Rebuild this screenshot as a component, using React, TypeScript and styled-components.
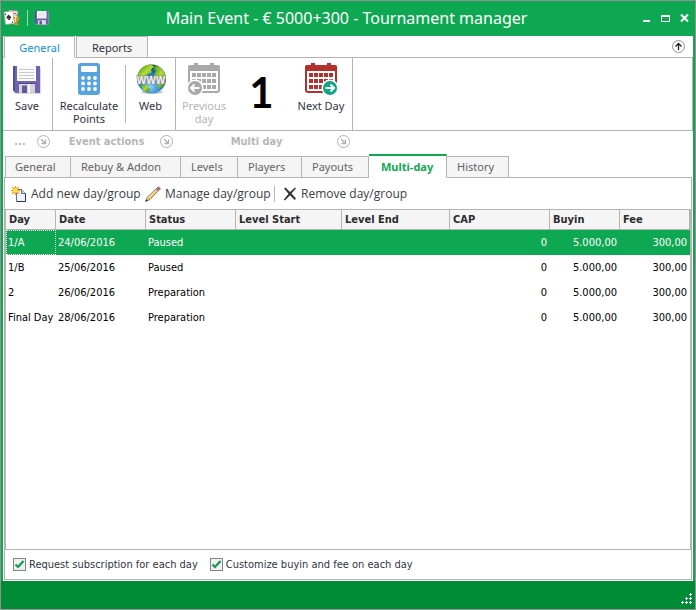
import React from "react";
import styled, { createGlobalStyle, css } from "styled-components";

const GREEN = "#0ea853";
const LINE = "#b4b4b4";
const SANS = '"Noto Sans", Tahoma, sans-serif';
const NARROW = '"DejaVu Sans Condensed", Tahoma, sans-serif';

const GlobalStyle = createGlobalStyle`
  *, *::before, *::after { box-sizing: border-box; }
  body { margin: 0; background: #ffffff; }
  button, input { font: inherit; color: inherit; margin: 0; padding: 0; border: 0; background: none; }
`;

const Window = styled.div`
  display: flex;
  flex-direction: column;
  min-height: 100vh;
  border: 1px solid #929292;
  background: ${GREEN};
  font-family: ${SANS};
  font-size: 11px;
  line-height: 13px;
  color: #2f3340;
`;

const TitleBar = styled.header`
  display: grid;
  grid-template-columns: 1fr auto 1fr;
  align-items: center;
  height: 35px;
  padding: 0 5px 2px 2px;
  color: #ffffff;
`;

const QuickAccess = styled.div`
  display: flex;
  align-items: center;
  gap: 7px;
  button { display: flex; }
`;

const QuickDivider = styled.span`
  width: 1px;
  height: 16px;
  background: #9bd8b4;
`;

const WindowTitle = styled.h1`
  margin: 0;
  font-size: 16px;
  line-height: 24px;
  font-weight: 400;
  white-space: nowrap;
`;

const WindowButtons = styled.div`
  display: flex;
  justify-content: flex-end;
  gap: 8px;
  button { display: flex; }
`;

const Body = styled.div`
  display: flex;
  flex: 1;
  flex-direction: column;
  margin: 0 2px;
  padding-bottom: 1px;
  background: #ffffff;
`;

const RibbonTabs = styled.nav`
  display: flex;
  align-items: center;
  height: 21px;
  padding-left: 1px;
`;

const RibbonTab = styled.button<{ $active?: boolean }>`
  width: ${(p) => (p.$active ? "71px" : "72px")};
  height: 22px;
  margin-right: 1px;
  border: 1px solid ${LINE};
  border-bottom-color: ${(p) => (p.$active ? "#ffffff" : LINE)};
  background: ${(p) => (p.$active ? "#ffffff" : "#f5f5f5")};
  color: ${(p) => (p.$active ? "#0a8fdc" : "#2f3340")};
  align-self: flex-start;
  z-index: 1;
`;

const CollapseButton = styled.button`
  display: flex;
  margin-left: auto;
  margin-right: 8px;
`;

const Ribbon = styled.div`
  display: flex;
  height: 74px;
  border: 1px solid ${LINE};
  border-left: 0;
`;

const RibbonGroup = styled.div<{ $width: number }>`
  display: flex;
  align-items: flex-start;
  width: ${(p) => p.$width}px;
  border-right: 1px solid ${LINE};
`;

const RibbonButton = styled.button<{ $width: number }>`
  display: flex;
  flex-direction: column;
  align-items: center;
  gap: 4px;
  width: ${(p) => p.$width}px;
  padding-top: 5px;
  color: #2f3340;
  &:disabled { color: #b4b4b4; }
`;

const RibbonDivider = styled.span`
  width: 1px;
  height: 58px;
  margin-top: 7px;
  background: ${LINE};
`;

const DayNumber = styled.output`
  width: 59px;
  padding-top: 11px;
  text-align: center;
  font-family: Lato, sans-serif;
  font-size: 42px;
  line-height: 46px;
  font-weight: 700;
  color: #000000;
`;

const Captions = styled.div`
  display: flex;
  height: 21px;
  margin-bottom: 3px;
`;

const Caption = styled.div<{ $width: number }>`
  display: flex;
  align-items: center;
  width: ${(p) => p.$width}px;
  padding-right: 3px;
  font-family: ${NARROW};
  font-weight: 700;
  color: #b6b6b6;
  span { flex: 1; text-align: center; }
  button { display: flex; }
`;

const PageTabs = styled.nav`
  display: flex;
  align-items: flex-end;
  height: 23px;
  margin-left: 2px;
`;

const PageTab = styled.button<{ $width: number; $active?: boolean }>`
  width: ${(p) => p.$width}px;
  height: 22px;
  padding: 0 10px 1px;
  text-align: left;
  border: 1px solid ${LINE};
  border-left-width: 0;
  background: #f5f5f5;
  color: #636363;
  &:first-child { padding-left: 9px; border-left-width: 1px; }
  ${(p) =>
    p.$active &&
    css`
      height: 24px;
      padding: 0 12px 1px;
      border-top: 2px solid ${GREEN};
      border-bottom-color: #ffffff;
      background: #ffffff;
      color: ${GREEN};
      font-weight: 700;
    `}
`;

const Page = styled.main`
  display: flex;
  flex: 1;
  flex-direction: column;
  margin: -1px 1px 0;
  border: 1px solid ${LINE};
`;

const RaisedTabs = styled.div`
  z-index: 1;
`;

const Toolbar = styled.div`
  display: flex;
  align-items: center;
  height: 31px;
  padding-left: 6px;
  font-family: "Open Sans", Tahoma, sans-serif;
  font-size: 12px;
  line-height: 16px;
`;

const ToolButton = styled.button<{ $width?: number }>`
  display: flex;
  align-items: center;
  gap: 4px;
  width: ${(p) => p.$width}px;
  color: #3a3d45;
  white-space: nowrap;
`;

const ToolDivider = styled.span`
  width: 1px;
  height: 16px;
  margin-right: 8px;
  background: ${LINE};
`;

const GridFrame = styled.div`
  flex: 1;
  border: 1px solid ${LINE};
`;

const DayTable = styled.table`
  width: 100%;
  table-layout: fixed;
  border-collapse: separate;
  border-spacing: 0;
  font-family: ${NARROW};
  color: #000000;
`;

const HeadCell = styled.th`
  height: 20px;
  padding: 0 3px 1px;
  border-right: 1px solid ${LINE};
  border-bottom: 1px solid ${LINE};
  background: #f5f5f5;
  color: #2c2c2c;
  font-weight: 700;
  text-align: left;
`;

const Row = styled.tr<{ $selected?: boolean }>`
  ${(p) =>
    p.$selected &&
    css`
      background: ${GREEN};
      color: #ffffff;
      td:first-child { outline: 1px dotted #ffffff; outline-offset: -1px; }
    `}
`;

const Cell = styled.td<{ $number?: boolean }>`
  height: 25px;
  padding: 0 3px 1px;
  padding-left: 2px;
  text-align: ${(p) => (p.$number ? "right" : "left")};
  white-space: nowrap;
`;

const Options = styled.div`
  display: flex;
  align-items: center;
  gap: 12px;
  height: 29px;
  padding-left: 8px;
  font-family: ${NARROW};
`;

const CheckLabel = styled.label`
  display: flex;
  align-items: center;
  gap: 3px;
`;

const CheckFrame = styled.span`
  display: grid;
  width: 13px;
  height: 13px;
  > * { grid-area: 1 / 1; }
  svg { pointer-events: none; visibility: hidden; }
  input:checked + svg { visibility: visible; }
`;

const CheckInput = styled.input`
  appearance: none;
  width: 13px;
  height: 13px;
  border: 1px solid #868686;
  background: #f0f0f0;
`;

const StatusBar = styled.footer`
  display: flex;
  align-items: flex-end;
  justify-content: flex-end;
  height: 28px;
  padding: 0 3px 4px;
  background: #008c37;
`;

function FloppyIcon({ size }: { size: number }) {
  return (
    <svg width={size} height={size} viewBox={size > 20 ? "-2 -3 32 32" : "0 0 28 28"} aria-hidden="true">
      <path d="M1.500 1.500h26v26h-25l-1-1z" fill="#b9b5c9" />
      <path d="M0 0h27v27H2.500L0 24.500z" fill="#7162b2" />
      <path d="M0 0h2v25l-2-1z" fill="#5a4c97" />
      <path d="M4 0h19v15H4z" fill="#fafafa" />
      <path d="M6 3.500h15M6 6.500h15M6 9.500h15M6 12.500h15" stroke="#c9c9c9" />
      <path d="M6 18h16v9H6z" fill="#d3d3d8" />
      <path d="M6 17.500h16" stroke="#51448a" />
      <path d="M9 19.500h5v7.500H9z" fill="#655898" />
      <path d="M16 18v9" stroke="#f6f6f6" strokeWidth="2" />
    </svg>
  );
}

function CardsIcon() {
  return (
    <svg width="17" height="17" viewBox="0 0 17 17" aria-hidden="true">
      <path d="M6 1l9 1-1 12-9-1z" fill="#e9e5e1" stroke="#8b8781" strokeWidth=".7" />
      <path d="M1 3l9-1 1.500 12.500-9 1z" fill="#fff" stroke="#a9a59f" strokeWidth=".7" />
      <path d="M5.500 5.500C4.500 7 3.500 7.500 3.500 8.700c0 1.300 1.500 1.300 2 .6L5 11h2l-.500-1.700c.6.6 1.800.3 1.700-.8C8 7.500 6.800 7 5.500 5.500z" fill="#333" />
      <path d="M2.500 4.500v1.500M9.500 12.500v1.500" stroke="#444" />
      <path d="M11 4.500h2M12.500 6h1.500" stroke="#c25a40" />
      <path d="M10 8h6.500l-1 3.500-1.500 1v2h1.500V16H11v-1.500h1.500v-2l-1.500-1z" fill="#d9962c" />
      <path d="M12.500 8v4" stroke="#ffe79a" />
    </svg>
  );
}

function CalculatorIcon() {
  return (
    <svg width="32" height="32" viewBox="0 0 32 32" aria-hidden="true">
      <rect x="5" y="0" width="22" height="32" rx="3" fill="#55a3df" />
      <rect x="8" y="3" width="16" height="6" rx="1" fill="#fff" />
      {[15, 20.5, 26].map((y) =>
        [10, 16, 22].map((x) => <circle key={`${x}-${y}`} cx={x} cy={y} r="1.900" fill="#fff" />)
      )}
    </svg>
  );
}

function GlobeIcon() {
  return (
    <svg width="32" height="32" viewBox="0 0 32 32" aria-hidden="true">
      <defs>
        <radialGradient id="sea" cx="45%" cy="75%" r="75%">
          <stop offset="0" stopColor="#8fd4f7" />
          <stop offset=".5" stopColor="#2482cc" />
          <stop offset="1" stopColor="#0c3977" />
        </radialGradient>
        <linearGradient id="land" x1="0" x2="1" y2="1">
          <stop offset="0" stopColor="#318f20" />
          <stop offset=".5" stopColor="#b5dc32" />
          <stop offset="1" stopColor="#2f7d1c" />
        </linearGradient>
      </defs>
      <ellipse cx="17" cy="29" rx="11" ry="2" fill="#c8c8c8" />
      <circle cx="16.500" cy="16" r="14.500" fill="url(#sea)" />
      <path d="M3 10C6 4 11 1.500 16 1.500l3 2-3 3 1 3-5 2-3 5-5-1z" fill="url(#land)" />
      <path d="M21 2c5 2 9 7 10 12l-2 8-5 4-2-5 2-4-5-5 2-4-3-3z" fill="url(#land)" />
      <path d="M5 21l6 1 4 4-2 4C9 28 6 25 5 21z" fill="url(#land)" />
      <text x="16" y="20.500" textAnchor="middle" fontFamily="Liberation Sans, sans-serif" fontSize="10" fontWeight="700" fill="#f2f2f2" stroke="#8a8a8a" strokeWidth="1.200" paintOrder="stroke">WWW</text>
    </svg>
  );
}

function CalendarIcon({ next }: { next?: boolean }) {
  const color = next ? "#b5302d" : "#a9a9a9";
  const badge = next ? "#0ca683" : "#a9a9a9";
  const cx = next ? 25 : 7;
  return (
    <svg width="32" height="32" viewBox="0 0 32 32" aria-hidden="true">
      <rect x="1" y="3" width="30" height="26" rx="2" fill="#fff" stroke={color} strokeWidth="2" />
      <path d="M0 8V4q0-2 2-2h4V0h4v2h12V0h4v2h4q2 0 2 2v4z" fill={color} />
      {[10, 16, 22].map((y) =>
        [4, 9, 14, 19, 24].map((x) => <rect key={`${x}-${y}`} x={x} y={y} width="4" height="4" fill={color} />)
      )}
      <circle cx={cx} cy="25" r="8.500" fill="#fff" />
      <circle cx={cx} cy="25" r="7" fill={badge} />
      <path
        d={next ? "M20.500 25h8M25.500 21.500l3.500 3.500-3.500 3.500" : "M11.500 25h-8M6.500 21.500L3 25l3.500 3.500"}
        fill="none"
        stroke="#fff"
        strokeWidth="2"
      />
    </svg>
  );
}

function LauncherIcon() {
  return (
    <svg width="13" height="13" viewBox="0 0 13 13" fill="none" stroke="#b0b0b0" aria-hidden="true">
      <circle cx="6.500" cy="6.500" r="6" />
      <path d="M4 4l4.500 4.500M4.500 8.500h4v-4" strokeWidth="1.300" />
    </svg>
  );
}

function CollapseIcon() {
  return (
    <svg width="13" height="13" viewBox="0 0 13 13" fill="none" aria-hidden="true">
      <circle cx="6.500" cy="6.500" r="6" stroke="#929292" />
      <path d="M6.500 10V4M3.500 6.500l3-3 3 3" stroke="#222" strokeWidth="1.300" />
    </svg>
  );
}

function NewPageIcon() {
  return (
    <svg width="16" height="16" viewBox="0 0 16 16" aria-hidden="true">
      <path d="M5.500 3.500h5l4 4v8h-9z" fill="#eff5ff" stroke="#5d718e" />
      <path d="M14.500 7v8.500H6" fill="none" stroke="#26354c" />
      <path d="M10.500 3.500v4h4" fill="#c7d9f3" stroke="#5d718e" />
      <path d="M4.500 0v9M0 4.500h9M1.300 1.300l6.400 6.400M7.700 1.300L1.300 7.700" stroke="#f09b16" strokeWidth="1.500" />
      <circle cx="4.500" cy="4.500" r="2.300" fill="#ffe34d" />
    </svg>
  );
}

function PencilIcon() {
  return (
    <svg width="16" height="16" viewBox="0 0 16 16" aria-hidden="true">
      <path d="M.5 15.500l2-4.500L11.500 2.500l2 2L5 13.500z" fill="#e9c777" stroke="#7a643c" strokeWidth=".8" />
      <path d="M3.500 11.500L12 3.500" stroke="#fff2bd" />
      <path d="M11.500 2.500L13 1q2 0 2.500 2L14 4.500z" fill="#cf6d62" stroke="#8c5048" strokeWidth=".6" />
      <path d="M10.800 3l2.300 2.300" stroke="#9da7ad" strokeWidth="1.300" />
      <path d="M.5 15.500l.9-2.200 1.400 1.300z" fill="#222" />
    </svg>
  );
}

function RemoveIcon() {
  return (
    <svg width="14" height="14" viewBox="0 0 14 14" aria-hidden="true">
      <path d="M1 1.500L2.500.500 7 5l5-4.500 1 .8L8.500 6.500l4.500 5-1.300 1.500L7 8.300 2 13.500.800 12.700 5.500 6.800z" fill="#303238" />
    </svg>
  );
}

function CheckMark() {
  return (
    <svg width="13" height="13" viewBox="0 0 13 13" aria-hidden="true">
      <path d="M2.500 6.500L5 9l5.500-6" fill="none" stroke="#109c4b" strokeWidth="2.200" />
    </svg>
  );
}

const pageTabs = [
  { label: "General", width: 66 },
  { label: "Rebuy & Addon", width: 110 },
  { label: "Levels", width: 57 },
  { label: "Players", width: 64 },
  { label: "Payouts", width: 67 },
  { label: "Multi-day", width: 78, active: true },
  { label: "History", width: 62 },
];

const columns: { label: string; width?: number }[] = [
  { label: "Day", width: 50 },
  { label: "Date", width: 90 },
  { label: "Status", width: 90 },
  { label: "Level Start", width: 106 },
  { label: "Level End", width: 108 },
  { label: "CAP" },
  { label: "Buyin", width: 70 },
  { label: "Fee", width: 70 },
];

const days = [
  { day: "1/A", date: "24/06/2016", status: "Paused" },
  { day: "1/B", date: "25/06/2016", status: "Paused" },
  { day: "2", date: "26/06/2016", status: "Preparation" },
  { day: "Final Day", date: "28/06/2016", status: "Preparation" },
];

function CheckOption({ children }: { children: React.ReactNode }) {
  return (
    <CheckLabel>
      <CheckFrame>
        <CheckInput type="checkbox" defaultChecked />
        <CheckMark />
      </CheckFrame>
      {children}
    </CheckLabel>
  );
}

export default function App() {
  return (
    <>
      <GlobalStyle />
      <Window>
        <TitleBar>
          <QuickAccess>
            <CardsIcon />
            <QuickDivider />
            <button type="button" aria-label="Save">
              <FloppyIcon size={14} />
            </button>
          </QuickAccess>
          <WindowTitle>Main Event - € 5000+300 - Tournament manager</WindowTitle>
          <WindowButtons>
            <button type="button" aria-label="Minimize">
              <svg width="11" height="11" viewBox="0 0 11 11"><path d="M2 8h7v2H2z" fill="#fff" /></svg>
            </button>
            <button type="button" aria-label="Maximize">
              <svg width="11" height="11" viewBox="0 0 11 11"><path d="M1 3h9v7H1zM2 5v4h7V5z" fill="#fff" fillRule="evenodd" /></svg>
            </button>
            <button type="button" aria-label="Close">
              <svg width="11" height="11" viewBox="0 0 11 11"><path d="M2 2.500l7 7M9 2.500l-7 7" stroke="#fff" strokeWidth="2" /></svg>
            </button>
          </WindowButtons>
        </TitleBar>
        <Body>
          <RibbonTabs>
            <RibbonTab type="button" $active>General</RibbonTab>
            <RibbonTab type="button">Reports</RibbonTab>
            <CollapseButton type="button" aria-label="Collapse ribbon">
              <CollapseIcon />
            </CollapseButton>
          </RibbonTabs>
          <Ribbon>
            <RibbonGroup $width={50}>
              <RibbonButton type="button" $width={48}>
                <FloppyIcon size={32} />
                Save
              </RibbonButton>
            </RibbonGroup>
            <RibbonGroup $width={123}>
              <RibbonButton type="button" $width={72}>
                <CalculatorIcon />
                Recalculate Points
              </RibbonButton>
              <RibbonDivider />
              <RibbonButton type="button" $width={49}>
                <GlobeIcon />
                Web
              </RibbonButton>
            </RibbonGroup>
            <RibbonGroup $width={177}>
              <RibbonButton type="button" $width={56} disabled>
                <CalendarIcon />
                Previous day
              </RibbonButton>
              <DayNumber>1</DayNumber>
              <RibbonButton type="button" $width={60}>
                <CalendarIcon next />
                Next Day
              </RibbonButton>
            </RibbonGroup>
          </Ribbon>
          <Captions>
            {[
              { label: "...", width: 50 },
              { label: "Event actions", width: 123 },
              { label: "Multi day", width: 177 },
            ].map((c) => (
              <Caption key={c.label} $width={c.width}>
                <span>{c.label}</span>
                <button type="button" aria-label={`${c.label} options`}>
                  <LauncherIcon />
                </button>
              </Caption>
            ))}
          </Captions>
          <RaisedTabs>
            <PageTabs>
              {pageTabs.map((t) => (
                <PageTab key={t.label} type="button" $width={t.width} $active={t.active}>
                  {t.label}
                </PageTab>
              ))}
            </PageTabs>
          </RaisedTabs>
          <Page>
            <Toolbar>
              <ToolButton type="button" $width={134}>
                <NewPageIcon />
                Add new day/group
              </ToolButton>
              <ToolButton type="button" $width={129}>
                <PencilIcon />
                Manage day/group
              </ToolButton>
              <ToolDivider />
              <ToolButton type="button">
                <RemoveIcon />
                Remove day/group
              </ToolButton>
            </Toolbar>
            <GridFrame>
              <DayTable>
                <colgroup>
                  {columns.map((c) => (
                    <col key={c.label} width={c.width} />
                  ))}
                </colgroup>
                <thead>
                  <tr>
                    {columns.map((c) => (
                      <HeadCell key={c.label} scope="col">{c.label}</HeadCell>
                    ))}
                  </tr>
                </thead>
                <tbody>
                  {days.map((d, i) => (
                    <Row key={d.day} $selected={i === 0}>
                      <Cell>{d.day}</Cell>
                      <Cell>{d.date}</Cell>
                      <Cell>{d.status}</Cell>
                      <Cell />
                      <Cell />
                      <Cell $number>0</Cell>
                      <Cell $number>5.000,00</Cell>
                      <Cell $number>300,00</Cell>
                    </Row>
                  ))}
                </tbody>
              </DayTable>
            </GridFrame>
            <Options>
              <CheckOption>Request subscription for each day</CheckOption>
              <CheckOption>Customize buyin and fee on each day</CheckOption>
            </Options>
          </Page>
        </Body>
        <StatusBar>
          <svg width="12" height="12" viewBox="0 0 12 12" stroke="#fff" aria-hidden="true">
            <path d="M9 1.500h3M10.500 0v3M5 5.500h3M6.500 4v3M9 5.500h3M10.500 4v3M1 9.500h3M2.500 8v3M5 9.500h3M6.500 8v3M9 9.500h3M10.500 8v3" />
          </svg>
        </StatusBar>
      </Window>
    </>
  );
}
